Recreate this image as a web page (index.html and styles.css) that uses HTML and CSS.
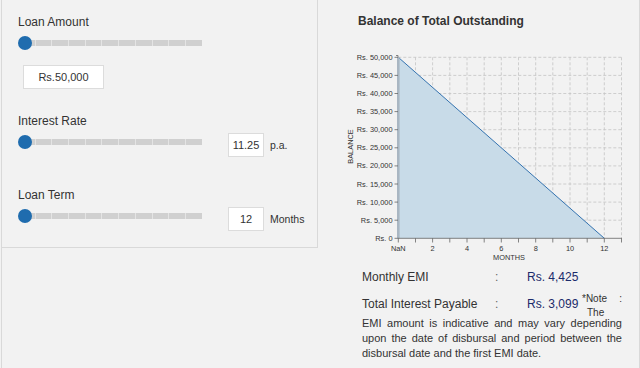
FILE: index.html
```html
<!DOCTYPE html>
<html lang="en">
<head>
    <meta charset="UTF-8">
    <meta name="viewport" content="width=device-width, initial-scale=1.0">
    <title>EMI Calculator</title>
    <link rel="stylesheet" href="styles.css">
</head>
<body>
    <div class="page">
        <!-- loan inputs -->
        <div class="calc-panel">
            <div class="field-label first">Loan Amount</div>
            <div class="slider-row">
                <div class="slider">
                    <div class="slider-track"></div>
                    <div class="slider-thumb"></div>
                </div>
            </div>
            <input type="text" class="amount-input" value="Rs.50,000">

            <div class="field-label">Interest Rate</div>
            <div class="slider-row">
                <div class="slider">
                    <div class="slider-track"></div>
                    <div class="slider-thumb"></div>
                </div>
                <div class="value-group">
                    <input type="text" class="num-input" value="11.25">
                    <span class="unit">p.a.</span>
                </div>
            </div>

            <div class="field-label term">Loan Term</div>
            <div class="slider-row">
                <div class="slider">
                    <div class="slider-track"></div>
                    <div class="slider-thumb"></div>
                </div>
                <div class="value-group">
                    <input type="text" class="num-input" value="12">
                    <span class="unit">Months</span>
                </div>
            </div>
        </div>

        <!-- chart and results -->
        <div class="chart-panel">
            <h2 class="chart-title">Balance of Total Outstanding</h2>
            <svg class="chart" width="290" height="222" viewBox="340 44 290 222">
                <!-- grid -->
                <path class="grid" d="M398.3 220.2H621.5M398.3 202.1H621.5M398.3 184H621.5M398.3 165.9H621.5M398.3 147.8H621.5M398.3 129.7H621.5M398.3 111.6H621.5M398.3 93.5H621.5M398.3 75.4H621.5M398.3 57.3H621.5"/>
                <path class="grid" d="M415.5 57.3V238.3M432.6 57.3V238.3M449.8 57.3V238.3M467 57.3V238.3M484.2 57.3V238.3M501.3 57.3V238.3M518.5 57.3V238.3M535.7 57.3V238.3M552.8 57.3V238.3M570 57.3V238.3M587.2 57.3V238.3M604.3 57.3V238.3M621.5 57.3V238.3"/>

                <!-- balance area -->
                <polygon class="area" points="398.3,57.3 604.3,238.3 398.3,238.3"/>
                <line class="area-line" x1="398.3" y1="57.3" x2="604.3" y2="238.3"/>
                <rect class="y-domain" x="397" y="57" width="2.6" height="181.3"/>

                <!-- y axis -->
                <path class="tick" d="M394.5 238.3H398M394.5 220.2H398M394.5 202.1H398M394.5 184H398M394.5 165.9H398M394.5 147.8H398M394.5 129.7H398M394.5 111.6H398M394.5 93.5H398M394.5 75.4H398M394.5 57.3H398M396 55.5H398V57.3"/>
                <g class="axis-text" text-anchor="end">
                    <text x="392.5" y="240.8">Rs. 0</text>
                    <text x="392.5" y="222.7">Rs. 5,000</text>
                    <text x="392.5" y="204.6">Rs. 10,000</text>
                    <text x="392.5" y="186.5">Rs. 15,000</text>
                    <text x="392.5" y="168.4">Rs. 20,000</text>
                    <text x="392.5" y="150.3">Rs. 25,000</text>
                    <text x="392.5" y="132.2">Rs. 30,000</text>
                    <text x="392.5" y="114.1">Rs. 35,000</text>
                    <text x="392.5" y="96">Rs. 40,000</text>
                    <text x="392.5" y="77.9">Rs. 45,000</text>
                    <text x="392.5" y="59.8">Rs. 50,000</text>
                </g>
                <text class="axis-title" transform="translate(352.5 146.5) rotate(-90)" text-anchor="middle">BALANCE</text>

                <!-- x axis -->
                <line class="x-domain" x1="398" y1="238.3" x2="622" y2="238.3"/>
                <path class="tick" d="M398.3 238.3V242.5M415.5 238.3V242.5M432.6 238.3V242.5M449.8 238.3V242.5M467 238.3V242.5M484.2 238.3V242.5M501.3 238.3V242.5M518.5 238.3V242.5M535.7 238.3V242.5M552.8 238.3V242.5M570 238.3V242.5M587.2 238.3V242.5M604.3 238.3V242.5M621.5 238.3V242.5"/>
                <g class="axis-text" text-anchor="middle">
                    <text x="398.3" y="250.5">NaN</text>
                    <text x="432.6" y="250.5">2</text>
                    <text x="467" y="250.5">4</text>
                    <text x="501.3" y="250.5">6</text>
                    <text x="535.7" y="250.5">8</text>
                    <text x="570" y="250.5">10</text>
                    <text x="604.3" y="250.5">12</text>
                </g>
                <text class="axis-title" x="509" y="259.5" text-anchor="middle">MONTHS</text>
            </svg>

            <div class="results">
                <div class="result-row">
                    <span class="result-label">Monthly EMI</span>
                    <span class="result-colon">:</span>
                    <span class="result-value">Rs. 4,425</span>
                </div>
                <div class="result-row second">
                    <span class="result-label">Total Interest Payable</span>
                    <span class="result-colon">:</span>
                    <span class="result-value">Rs. 3,099</span>
                    <span class="note">
                        <span class="note-head"><span>*Note</span><span>:</span></span>
                        <span class="note-the">The</span>
                    </span>
                </div>
                <p class="note-text">EMI amount is indicative and may vary depending upon the date of disbursal and period between the disbursal date and the first EMI date.</p>
            </div>
        </div>
    </div>
</body>
</html>
```

FILE: styles.css
```css
body {
    margin: 0;
    background: #f2f2f2;
    font-family: "Liberation Sans", Arial, sans-serif;
    color: #333;
}

.page {
    display: flex;
    width: 637px;
    height: 368px;
    margin-left: 1px;
    border-left: 1px solid #d9d9d9;
    border-right: 1px solid #d9d9d9;
}

/* left panel */
.calc-panel {
    box-sizing: border-box;
    width: 316px;
    height: 248px;
    padding: 15px 0 0 16px;
    border-right: 1px solid #d9d9d9;
    border-bottom: 1px solid #d9d9d9;
}

.field-label {
    font-size: 12px;
    line-height: 14px;
    margin-top: 25px;
}

.field-label.first {
    margin-top: 0;
}

.field-label.term {
    margin-top: 31px;
}

.slider-row {
    display: flex;
    align-items: flex-start;
    margin-top: 5px;
}

.calc-panel .slider-row:nth-of-type(1) {
    margin-top: 7px;
}

.slider {
    position: relative;
    width: 184px;
    height: 14px;
    margin-top: 2px;
}

.calc-panel > .slider-row:first-of-type .slider {
    margin-top: 0;
}

.slider-track {
    position: absolute;
    left: 1px;
    right: 0;
    top: 4px;
    height: 6px;
    background: repeating-linear-gradient(90deg, #d0d0d0 0 15.7px, #e4e4e4 15.7px 16.7px);
}

.slider-thumb {
    position: absolute;
    left: 0;
    top: 0;
    width: 14px;
    height: 14px;
    border-radius: 50%;
    background: #1f6cae;
}

.amount-input,
.num-input {
    box-sizing: border-box;
    height: 24px;
    padding: 0;
    border: 1px solid #dcdcdc;
    background: #fff;
    font-family: inherit;
    font-size: 11px;
    color: #333;
    text-align: center;
    outline: none;
}

.amount-input {
    display: block;
    width: 81px;
    margin: 15px 0 0 5px;
}

.value-group {
    display: flex;
    align-items: center;
    margin-left: 26px;
}

.num-input {
    width: 36px;
}

.unit {
    margin-left: 6px;
    font-size: 10.5px;
}

/* right panel */
.chart-panel {
    flex: 1;
    padding-left: 22px;
}

.chart-title {
    margin: 14px 0 0 18px;
    font-size: 12px;
    line-height: 14px;
    font-weight: bold;
}

.chart {
    display: block;
    margin-top: 16px;
}

.grid {
    fill: none;
    stroke: #c4c4c4;
    stroke-width: 0.8;
    stroke-dasharray: 3 2;
}

.area {
    fill: #c8dbe8;
}

.area-line {
    stroke: #3473b0;
    stroke-width: 1;
}

.y-domain {
    fill: #a9b6c2;
}

.x-domain,
.tick {
    fill: none;
    stroke: #666;
    stroke-width: 0.8;
}

.axis-text text {
    font-size: 7.4px;
    fill: #333;
}

.axis-title {
    font-size: 7.4px;
    fill: #333;
}

.results {
    width: 260px;
    margin: 3px 0 0 22px;
}

.result-row {
    display: flex;
    align-items: flex-start;
    font-size: 12px;
    line-height: 16px;
}

.result-row.second {
    margin-top: 11px;
}

.result-label {
    width: 133px;
}

.result-colon {
    width: 32px;
    color: #666;
}

.result-value {
    color: #1b2b6b;
}

.note {
    display: flex;
    flex-direction: column;
    width: 40px;
    margin: -4px 0 0 auto;
    font-size: 10px;
    line-height: 14px;
}

.note-head {
    display: flex;
    justify-content: space-between;
}

.note-the {
    padding-left: 5px;
}

.note-text {
    margin: -4px 0 0;
    font-size: 11px;
    line-height: 15px;
    text-align: justify;
}
```
